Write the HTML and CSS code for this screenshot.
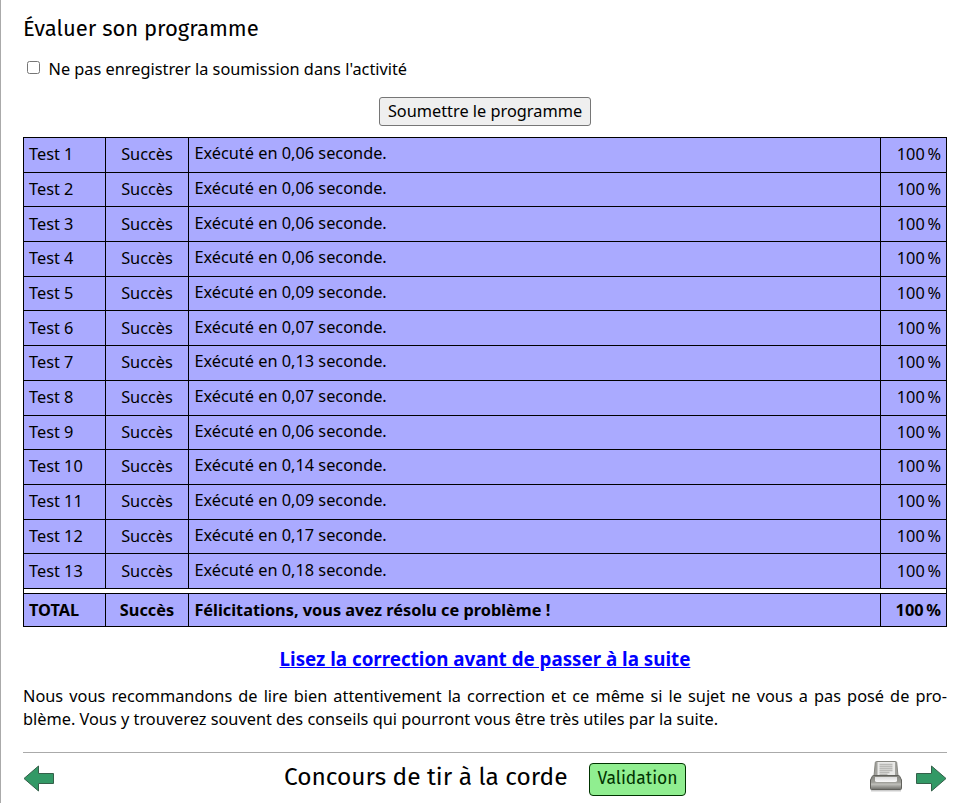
FILE: index.html
```
<!DOCTYPE html>
<html lang="fr">
<head>
<meta charset="utf-8">
<title>Concours de tir à la corde</title>
<link rel="stylesheet" href="styles.css">
</head>
<body>
<main class="page">
<h2 class="title">Évaluer son programme</h2>
<label class="option"><input type="checkbox"><span>Ne pas enregistrer la soumission dans l'activité</span></label>
<div class="submit"><button type="button">Soumettre le programme</button></div>
<div class="results">
<div class="row"><span>Test 1</span><span>Succès</span><span>Exécuté en 0,06 seconde.</span><span>100&#8239;%</span></div>
<div class="row"><span>Test 2</span><span>Succès</span><span>Exécuté en 0,06 seconde.</span><span>100&#8239;%</span></div>
<div class="row"><span>Test 3</span><span>Succès</span><span>Exécuté en 0,06 seconde.</span><span>100&#8239;%</span></div>
<div class="row"><span>Test 4</span><span>Succès</span><span>Exécuté en 0,06 seconde.</span><span>100&#8239;%</span></div>
<div class="row"><span>Test 5</span><span>Succès</span><span>Exécuté en 0,09 seconde.</span><span>100&#8239;%</span></div>
<div class="row"><span>Test 6</span><span>Succès</span><span>Exécuté en 0,07 seconde.</span><span>100&#8239;%</span></div>
<div class="row"><span>Test 7</span><span>Succès</span><span>Exécuté en 0,13 seconde.</span><span>100&#8239;%</span></div>
<div class="row"><span>Test 8</span><span>Succès</span><span>Exécuté en 0,07 seconde.</span><span>100&#8239;%</span></div>
<div class="row"><span>Test 9</span><span>Succès</span><span>Exécuté en 0,06 seconde.</span><span>100&#8239;%</span></div>
<div class="row"><span>Test 10</span><span>Succès</span><span>Exécuté en 0,14 seconde.</span><span>100&#8239;%</span></div>
<div class="row"><span>Test 11</span><span>Succès</span><span>Exécuté en 0,09 seconde.</span><span>100&#8239;%</span></div>
<div class="row"><span>Test 12</span><span>Succès</span><span>Exécuté en 0,17 seconde.</span><span>100&#8239;%</span></div>
<div class="row"><span>Test 13</span><span>Succès</span><span>Exécuté en 0,18 seconde.</span><span>100&#8239;%</span></div>
<div class="gap"></div>
<div class="row total"><span>TOTAL</span><span>Succès</span><span>Félicitations, vous avez résolu ce problème&nbsp;!</span><span>100&#8239;%</span></div>
</div>
<p class="next"><a href="#">Lisez la correction avant de passer à la suite</a></p>
<p class="advice">Nous vous recommandons de lire bien attentivement la correction et ce même si le sujet ne vous a pas posé de pro&shy;blème. Vous y trouverez souvent des conseils qui pourront vous être très utiles par la suite.</p>
<footer class="bar">
<svg class="arrow" viewBox="0 0 32 28"><path d="M1 13.500 15.500 1v7.500h15v10h-15V26Z"/></svg>
<div class="center"><span class="subject">Concours de tir à la corde</span><span class="badge">Validation</span></div>
<svg class="printer" viewBox="0 0 34 32">
<defs>
<linearGradient id="tray" x1="0" y1="0" x2="0" y2="1"><stop offset="0" stop-color="#85857f"/><stop offset=".5" stop-color="#a0a09a"/><stop offset=".62" stop-color="#c0c0bb"/><stop offset="1" stop-color="#6e6e69"/></linearGradient>
<linearGradient id="slot" x1="0" y1="0" x2="0" y2="1"><stop offset="0" stop-color="#ddd"/><stop offset="1" stop-color="#fafafa"/></linearGradient>
</defs>
<path d="M2 30.500h30" stroke="#ccc" stroke-width="2"/>
<path d="M7.500 1.500h19q1 0 1.200 1L29 16H5L6.300 2.500q.200-1 1.200-1Z" fill="#a2a29d" stroke="#85857f"/>
<path d="M8.500 2h17.500v14H8.500Z" fill="#e9e9e7"/>
<path d="M10.500 4.500h13M10.500 6.500h13M10.500 8.500h13M10.500 10.500h13M10.500 12.500h10M10.500 14.500h8" stroke="#b9b9b6" stroke-width="1.400"/>
<path d="M4.500 15.500h25q1 0 1.300 1L32.500 20v8.500q0 1-1 1h-29q-1 0-1-1V20l1.700-3.500q.300-1 1.300-1Z" fill="url(#tray)" stroke="#61615c"/>
<path d="M6 17h22v3.500q0 1.500-2 1.500H8q-2 0-2-1.500Z" fill="url(#slot)"/>
</svg>
<svg class="arrow" viewBox="0 0 32 28"><path d="M31 13.500 16.500 1v7.500h-15v10h15V26Z"/></svg>
</footer>
</main>
</body>
</html>
```
FILE: styles.css
```
* { box-sizing: border-box; }
html, body { margin: 0; height: 100%; }
body { background: #fff; color: #000; font: 16.32px/23px "Noto Sans", sans-serif; overflow: hidden; }
.page { height: 803px; border-left: 1px solid #aaa; padding: 11px 22px 0; display: flex; flex-direction: column; }
.title { margin: 0; height: 33px; font-family: "Fira Sans", "Noto Sans", sans-serif; font-size: 22.03px; line-height: 35px; font-weight: 400; }
.option { display: flex; align-items: center; height: 24px; margin-top: 13px; }
.option input { width: 13px; height: 13px; margin: 0 8.5px 3px 4px; }
.submit { height: 30px; margin-top: 16px; display: flex; justify-content: center; align-items: flex-start; }
.submit button { width: 212px; height: 29px; padding: 0 0 2px; font: 16.32px/22px "Noto Sans", sans-serif; color: #000; background: #efefef; border: 1px solid #767676; border-radius: 3px; }
.results { margin-top: 10px; border: 1px solid #000; border-bottom: 0; }
.row { display: grid; grid-template-columns: 82px 83px 692px 1fr; height: 34.69px; background: #aaf; border-bottom: 1px solid #000; line-height: 33px; }
.row span { padding: 0.3px 5px 0; border-right: 1px solid #000; white-space: nowrap; }
.row span:nth-child(2) { text-align: center; }
.row span:nth-child(3) { line-height: 31px; padding-left: 5.4px; }
.row span:last-child { text-align: right; border-right: 0; letter-spacing: -0.15px; }
.gap { height: 5px; background: #fff; border-bottom: 1px solid #000; }
.total { height: 33px; font-weight: 700; }
.total span, .total span:nth-child(3) { line-height: 32px; padding-top: 0; }
.next { margin: 19px 0 0; height: 26px; text-align: center; font-size: 18.77px; line-height: 25px; font-weight: 700; }
.next a { color: #00f; }
.advice { margin: 13px 0 0; text-align: justify; hyphens: manual; }
.bar { margin-top: 21px; border-top: 1px solid #aaa; height: 51px; display: flex; align-items: flex-start; padding-top: 10px; }
.arrow { width: 32px; height: 28px; margin-top: 2px; flex: none; }
.arrow path { fill: #396; stroke: #35604a; stroke-width: 1; }
.center { flex: 1; display: flex; padding-left: 229px; font-family: "Fira Sans", "Noto Sans", sans-serif; }
.subject { width: 305px; font-size: 24.48px; line-height: 28px; white-space: nowrap; }
.badge { width: 97px; height: 33px; border: 1px solid #030; border-radius: 4px; background: #90ee90; color: #030; text-align: center; font-size: 17.5px; line-height: 30px; }
.printer { width: 34px; height: 32px; margin: -3px 12px 0 0; flex: none; }
```
